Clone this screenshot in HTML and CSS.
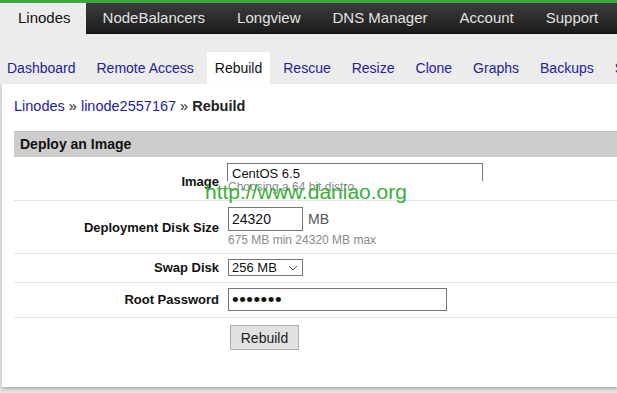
FILE: index.html
```html
<!DOCTYPE html>
<html lang="en">
<head>
  <meta charset="UTF-8">
  <title>Rebuild - Linode Manager</title>
  <link rel="stylesheet" href="styles.css">
</head>
<body>

  <header class="top-nav">
    <a class="top-tab active">Linodes</a>
    <a class="top-tab">NodeBalancers</a>
    <a class="top-tab">Longview</a>
    <a class="top-tab">DNS Manager</a>
    <a class="top-tab">Account</a>
    <a class="top-tab">Support</a>
  </header>

  <nav class="sub-nav">
    <a class="sub-tab">Dashboard</a>
    <a class="sub-tab">Remote Access</a>
    <a class="sub-tab active">Rebuild</a>
    <a class="sub-tab">Rescue</a>
    <a class="sub-tab">Resize</a>
    <a class="sub-tab">Clone</a>
    <a class="sub-tab">Graphs</a>
    <a class="sub-tab">Backups</a>
    <a class="sub-tab">Settings</a>
  </nav>

  <main class="page">
    <div class="crumbs">
      <a>Linodes</a> &raquo; <a>linode2557167</a> &raquo; <strong>Rebuild</strong>
    </div>

    <section class="box">
      <div class="box-title">Deploy an Image</div>

      <div class="form-row row-image">
        <strong class="label">Image</strong>
        <div class="field">
          <div class="fake-select">CentOS 6.5</div>
          <div class="hint clip">Choosing a 64 bit distro is recommended</div>
        </div>
      </div>

      <div class="form-row row-disk">
        <strong class="label">Deployment Disk Size</strong>
        <div class="field">
          <div class="inline">
            <input type="text" class="text-box size-box" value="24320">
            <span class="unit">MB</span>
          </div>
          <div class="hint">675 MB min 24320 MB max</div>
        </div>
      </div>

      <div class="form-row row-swap">
        <strong class="label">Swap Disk</strong>
        <div class="field">
          <div class="swap-select">
            <span>256 MB</span>
            <svg width="10" height="6" viewBox="0 0 10 6"><path d="M1 1l4 4 4-4" fill="none" stroke="#555" stroke-width="1"/></svg>
          </div>
        </div>
      </div>

      <div class="form-row row-pass">
        <strong class="label">Root Password</strong>
        <div class="field">
          <input type="password" class="text-box pass-box" value="secret1">
        </div>
      </div>

      <div class="button-row">
        <button type="button">Rebuild</button>
      </div>
    </section>

    <div class="watermark">http://www.daniao.org</div>
  </main>

</body>
</html>
```

FILE: styles.css
```css
body {
  margin: 0;
  font-family: "Liberation Sans", Arial, sans-serif;
  background-color: #e6e6e6;
  height: 100vh;
  overflow: hidden;
}

a {
  cursor: pointer;
}

.top-nav {
  display: flex;
  border-top: 3px solid #3fa540;
  background: linear-gradient(#3d3d3d, #1b1b1b);
  border-bottom: 1px solid #0e0e0e;
  box-sizing: border-box;
  height: 34px;
}

.top-tab {
  flex-shrink: 0;
  white-space: nowrap;
  padding: 0 15px 0 18px;
  font-size: 15px;
  color: #e2e2e2;
  line-height: 30px;
}

.top-tab + .top-tab {
  padding-left: 17px;
}

.top-tab.active {
  background-color: #ececec;
  color: #111;
  height: 31px;
}

.sub-nav {
  display: flex;
  gap: 6px;
  align-items: flex-end;
  background-color: #ececec;
  height: 50px;
}

.sub-tab {
  flex-shrink: 0;
  padding: 0 8px;
  margin-left: -1px;
  font-size: 14px;
  color: #23239b;
  line-height: 32px;
  white-space: nowrap;
}

.sub-tab.active {
  background-color: #fff;
  color: #111;
}

.page {
  position: relative;
  background-color: #fff;
  margin-left: 2px;
  padding: 14px 0 37px 12px;
  box-shadow: 0 2px 3px rgba(0, 0, 0, 0.25);
}

.crumbs {
  font-size: 14.5px;
  color: #222;
  height: 19px;
}

.crumbs a {
  color: #23239b;
}

.box {
  margin-top: 14px;
}

.box-title {
  background-color: #cdcdcd;
  font-size: 14px;
  font-weight: bold;
  color: #111;
  padding: 0 6px;
  line-height: 25px;
  border-top: 1px solid #c4c4c4;
}

.form-row {
  display: grid;
  grid-template-columns: 205px 1fr;
  align-items: center;
  border-bottom: 1px solid #e4e4e4;
  column-gap: 9px;
}

.label {
  text-align: right;
  font-size: 13px;
  color: #111;
}

.field {
  display: flex;
  flex-direction: column;
  align-items: flex-start;
}

.row-image {
  padding: 6px 0 6px;
  height: 44px;
  box-sizing: border-box;
  align-items: start;
}

.row-image .label {
  padding-top: 11px;
}

.fake-select {
  width: 250px;
  height: 17px;
  border: 1px solid #767676;
  border-bottom: none;
  margin-left: -1px;
  padding-left: 4px;
  font-size: 13px;
  line-height: 20px;
  color: #111;
}

.hint {
  font-size: 12px;
  color: #8a8a8a;
  line-height: 14px;
}

.clip {
  width: 128px;
  overflow: hidden;
  white-space: nowrap;
  margin-top: -1px;
  background-color: #fff;
}

.row-disk {
  padding: 6px 0 6px;
}

.inline {
  display: flex;
  align-items: center;
  gap: 5px;
  margin-bottom: 2px;
}

.text-box {
  border: 1px solid #767676;
  font-family: "Liberation Sans", Arial, sans-serif;
  font-size: 14px;
  color: #111;
  padding: 0 3px;
  box-sizing: border-box;
  margin: 0;
}

.size-box {
  width: 75px;
  height: 24px;
}

.unit {
  font-size: 14px;
  color: #555;
}

.row-swap {
  padding: 5px 0 6px;
}

.swap-select {
  display: flex;
  justify-content: space-between;
  align-items: center;
  width: 75px;
  height: 17px;
  border: 1px solid #767676;
  box-sizing: border-box;
  padding: 0 4px 0 3px;
  font-size: 13px;
  color: #111;
}

.row-pass {
  padding: 5px 0 6px;
}

.pass-box {
  width: 219px;
  height: 23px;
  font-size: 19px;
  letter-spacing: 0.5px;
}

.button-row {
  padding: 7px 0 0 216px;
}

.button-row button {
  font-family: "Liberation Sans", Arial, sans-serif;
  font-size: 14px;
  color: #222;
  background-color: #e1e1e1;
  border: 1px solid #adadad;
  width: 69px;
  height: 25px;
  padding: 0;
}

.watermark {
  position: absolute;
  left: 203px;
  top: 96px;
  font-size: 21px;
  color: #3bae3a;
}
```
